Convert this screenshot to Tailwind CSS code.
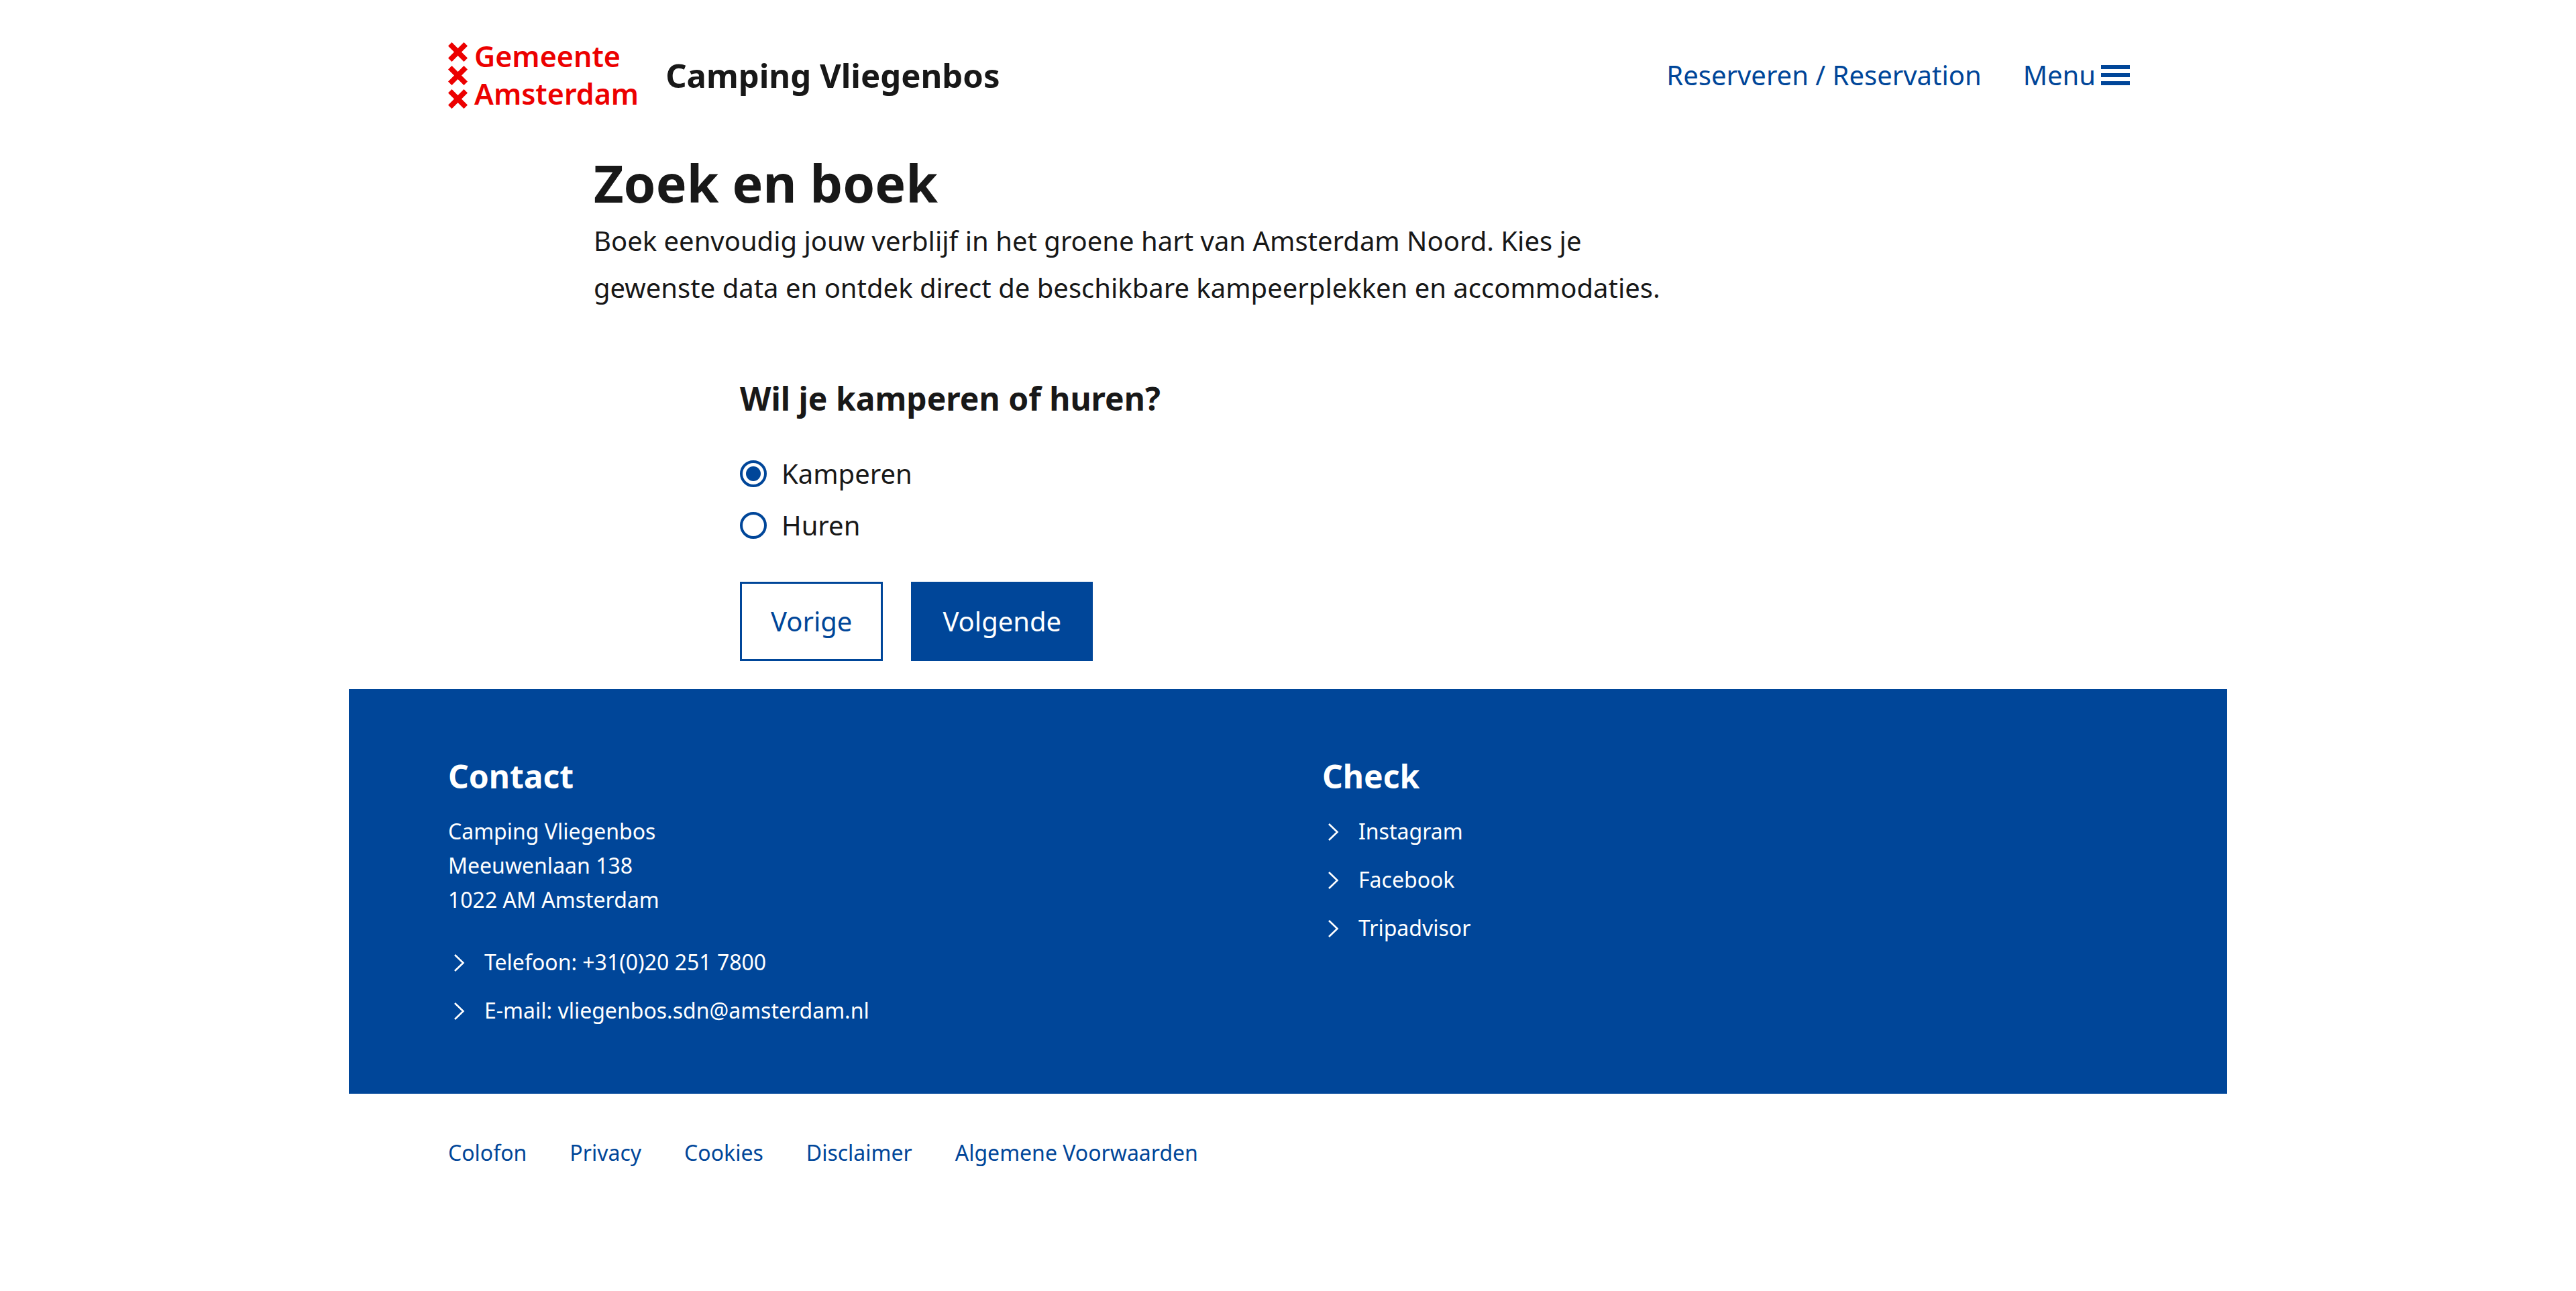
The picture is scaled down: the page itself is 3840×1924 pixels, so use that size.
<!DOCTYPE html>
<html lang="nl">
<head>
<meta charset="utf-8">
<meta name="viewport" content="width=device-width, initial-scale=1">
<title>Zoek en boek - Camping Vliegenbos</title>
<script src="https://cdn.jsdelivr.net/npm/@tailwindcss/browser@4"></script>
</head>
<body class="bg-white font-['Noto_Sans',sans-serif] text-[40px] text-[#181818]">
<svg class="hidden" aria-hidden="true">
  <symbol id="cross" viewBox="0 0 29 29"><path d="M0 5.5 5.5 0l9 9 9-9L29 5.5l-9 9 9 9-5.5 5.5-9-9-9 9L0 23.5l9-9z"/></symbol>
  <symbol id="chevron" viewBox="0 0 54 32"><path d="M10 5 22.5 17 10 29" fill="none" stroke="currentColor" stroke-width="2.6"/></symbol>
</svg>
<div class="mx-auto max-w-[2800px]">
  <header class="flex flex-wrap items-center justify-between pt-14 pr-[145px] pb-[54px] pl-[148px]">
    <div class="flex items-center gap-10">
      <a href="#" class="flex gap-[10px] text-[43px] leading-[56px] font-semibold text-[#ec0000]">
        <svg class="h-[112px] w-[29px]" viewBox="0 0 29 112" fill="currentColor" aria-hidden="true">
          <use href="#cross" x="0" y="7" width="29" height="29"/>
          <use href="#cross" x="0" y="42" width="29" height="29"/>
          <use href="#cross" x="0" y="77" width="29" height="29"/>
        </svg>
        <span>Gemeente<br>Amsterdam</span>
      </a>
      <a href="#" class="text-[49px] leading-[72px] font-bold">Camping Vliegenbos</a>
    </div>
    <nav class="flex items-center gap-[62px] text-[#004699]">
      <a href="#">Reserveren / Reservation</a>
      <button type="button" class="flex items-center gap-2">
        <span>Menu</span>
        <svg class="h-[30px] w-[43px]" viewBox="0 0 43 30" fill="currentColor" aria-hidden="true">
          <path d="M0 0h43v6H0zM0 12h43v6H0zM0 24h43v6H0z"/>
        </svg>
      </button>
    </nav>
  </header>

  <main class="pl-[365px]">
    <h1 class="text-[77px] leading-[102px] font-bold">Zoek en boek</h1>
    <p class="max-w-[1640px] leading-[70px]">Boek eenvoudig jouw verblijf in het groene hart van Amsterdam Noord. Kies je gewenste data en ontdek direct de beschikbare kampeerplekken en accommodaties.</p>
    <form class="pt-[94px] pb-[42px] pl-[218px]">
      <fieldset>
        <legend class="text-[48px] leading-[72px] font-bold">Wil je kamperen of huren?</legend>
        <div class="mt-[37px] leading-[77px]">
          <div class="flex items-center gap-[22px]">
            <input type="radio" id="kamperen" name="soort" value="kamperen" checked class="grid size-10 appearance-none place-items-center rounded-full border-4 border-[#004699] before:size-[22px] before:rounded-full checked:before:bg-[#004699]">
            <label for="kamperen">Kamperen</label>
          </div>
          <div class="flex items-center gap-[22px]">
            <input type="radio" id="huren" name="soort" value="huren" class="grid size-10 appearance-none place-items-center rounded-full border-4 border-[#004699] before:size-[22px] before:rounded-full checked:before:bg-[#004699]">
            <label for="huren">Huren</label>
          </div>
        </div>
      </fieldset>
      <div class="mt-[46px] flex gap-[42px] leading-[56px]">
        <button type="button" class="border-3 border-[#004699] px-[43px] py-7 text-[#004699]">Vorige</button>
        <button type="submit" class="border-3 border-[#004699] bg-[#004699] px-11 py-7 text-white">Volgende</button>
      </div>
    </form>
  </main>

  <footer class="text-[32px]">
    <div class="grid grid-cols-2 gap-x-[102px] bg-[#004699] px-[148px] pt-[94px] pb-[88px] text-white">
      <section>
        <h2 class="text-[48px] leading-[72px] font-bold">Contact</h2>
        <address class="mt-5 leading-[51px] not-italic">Camping Vliegenbos<br>Meeuwenlaan 138<br>1022 AM Amsterdam</address>
        <ul class="mt-8 leading-[72px]">
          <li><a href="#" class="flex items-center"><svg class="h-8 w-[54px]" aria-hidden="true"><use href="#chevron"/></svg>Telefoon: +31(0)20 251 7800</a></li>
          <li><a href="#" class="flex items-center"><svg class="h-8 w-[54px]" aria-hidden="true"><use href="#chevron"/></svg>E-mail: vliegenbos.sdn@amsterdam.nl</a></li>
        </ul>
      </section>
      <section>
        <h2 class="text-[48px] leading-[72px] font-bold">Check</h2>
        <ul class="mt-[10px] leading-[72px]">
          <li><a href="#" class="flex items-center"><svg class="h-8 w-[54px]" aria-hidden="true"><use href="#chevron"/></svg>Instagram</a></li>
          <li><a href="#" class="flex items-center"><svg class="h-8 w-[54px]" aria-hidden="true"><use href="#chevron"/></svg>Facebook</a></li>
          <li><a href="#" class="flex items-center"><svg class="h-8 w-[54px]" aria-hidden="true"><use href="#chevron"/></svg>Tripadvisor</a></li>
        </ul>
      </section>
    </div>
    <nav class="flex flex-wrap gap-x-16 px-[148px] py-[62px] leading-[51px] text-[#004699]">
      <a href="#">Colofon</a>
      <a href="#">Privacy</a>
      <a href="#">Cookies</a>
      <a href="#">Disclaimer</a>
      <a href="#">Algemene Voorwaarden</a>
    </nav>
  </footer>
</div>
</body>
</html>
